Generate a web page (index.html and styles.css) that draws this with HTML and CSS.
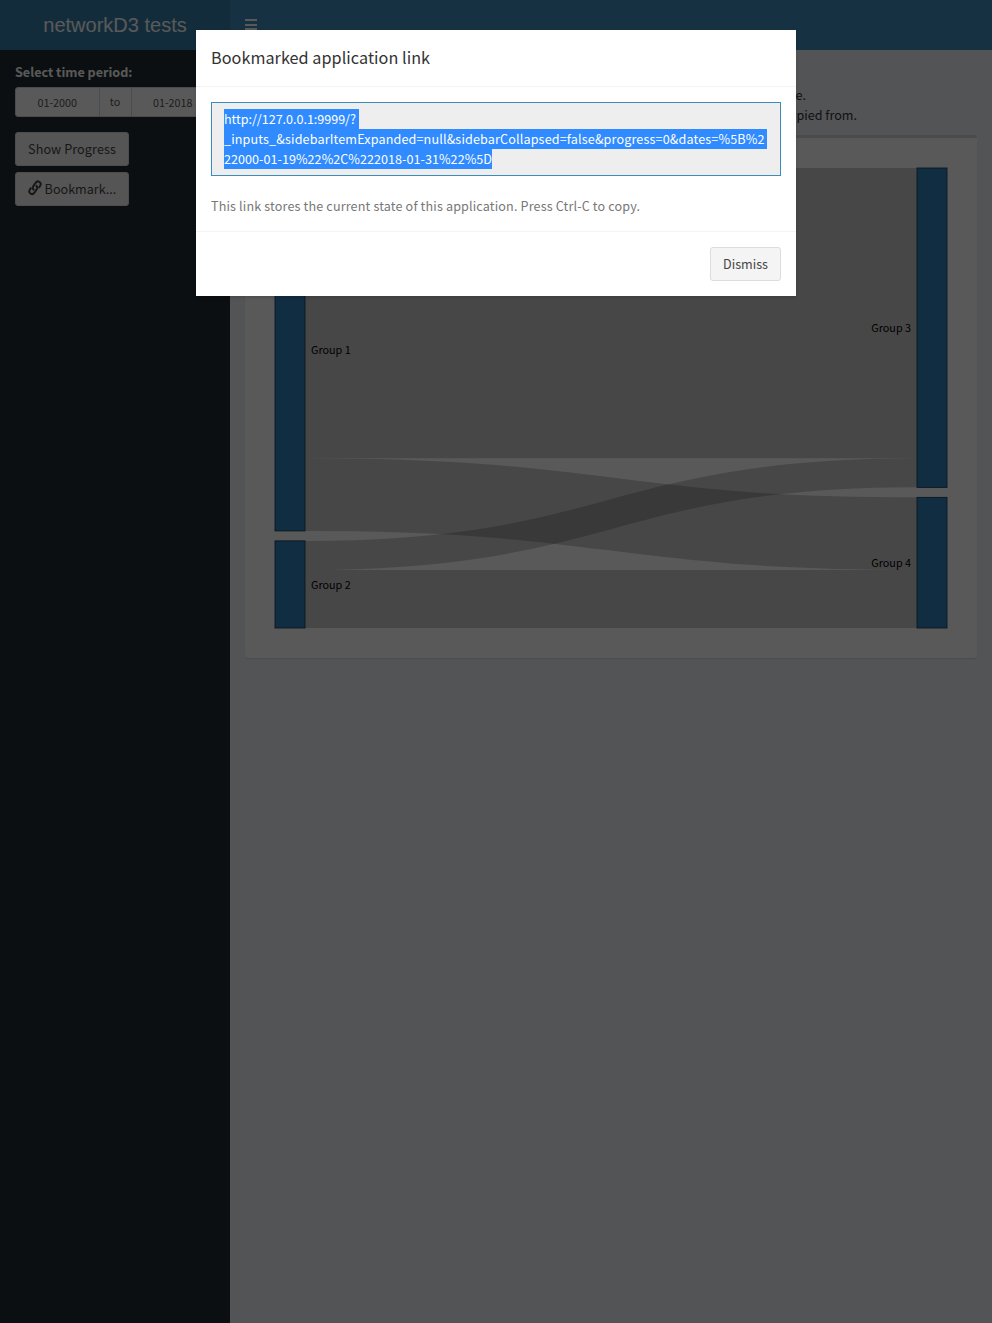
FILE: index.html
```html
<!DOCTYPE html>
<html lang="en">
<head>
<meta charset="utf-8">
<title>networkD3 tests</title>
<link rel="stylesheet" href="styles.css">
</head>
<body>
<div class="app">
  <header class="header">
    <div class="logo">networkD3 tests</div>
    <nav class="navbar">
      <svg class="bars" width="12" height="12" viewBox="0 0 12 12" shape-rendering="crispEdges"><path d="M0 0h12v2H0zM0 5h12v2H0zM0 9h12v2H0z" fill="#fff"/></svg>
    </nav>
  </header>
  <div class="main">
    <aside class="sidebar">
      <div class="label">Select time period:</div>
      <div class="range">
        <span class="date">01-2000</span><span class="to">to</span><span class="date">01-2018</span>
      </div>
      <button class="btn progress">Show Progress</button>
      <button class="btn bookmark"><svg class="link-icon" width="14" height="16" viewBox="0 0 14 16" fill="none" stroke="#444" stroke-width="2" stroke-linecap="butt" stroke-linejoin="round"><path d="M6.3 10.2C4.7 9.3 4.3 7.9 5.2 6.4L7.6 2.8C8.6 1.4 10.2 1.1 11.5 2C12.8 2.9 13.1 4.4 12.2 5.8L10.8 7.9"/><path d="M7.7 5.3C9.3 6.3 9.7 7.6 8.8 9.1L6.4 12.7C5.4 14.1 3.8 14.4 2.5 13.5C1.2 12.6.9 11.1 1.8 9.7L3.2 7.6"/></svg><span>Bookmark...</span></button>
    </aside>
    <main class="content">
      <div class="intro">
        <p class="line-a">from the source.</p>
        <p class="line-b">copied from.</p>
      </div>
      <section class="box">
        <svg class="sankey" width="674" height="462" viewBox="0 0 674 462">
          <g fill="none" stroke="#000" stroke-opacity=".2">
            <path d="M31 146.1H643" stroke-width="290.3"/>
            <path d="M31 327.6C337 327.6 337 366.6 643 366.6" stroke-width="72.6"/>
            <path d="M31 388.5C337 388.5 337 305.8 643 305.8" stroke-width="29"/>
            <path d="M31 432H643" stroke-width="58"/>
          </g>
          <g fill="#3182bd" stroke="#183f5c" stroke-opacity=".9">
            <rect x="1" y="1" width="30" height="362.9"/>
            <rect x="1" y="373.9" width="30" height="87.1"/>
            <rect x="643" y="1" width="30" height="319.4"/>
            <rect x="643" y="330.4" width="30" height="130.6"/>
          </g>
          <g class="node-text">
            <text x="37" y="186.5">Group 1</text>
            <text x="37" y="421.5">Group 2</text>
            <text x="637" y="164.5" text-anchor="end">Group 3</text>
            <text x="637" y="399.5" text-anchor="end">Group 4</text>
          </g>
        </svg>
      </section>
    </main>
  </div>
</div>
<div class="modal">
  <div class="dialog">
    <div class="dialog-header">Bookmarked application link</div>
    <div class="dialog-body">
      <div class="url">
        <div><span class="sel first">http://127.0.0.1:9999/?</span></div>
        <div><span class="sel second">_inputs_&amp;sidebarItemExpanded=null&amp;sidebarCollapsed=false&amp;progress=0&amp;dates=%5B%2</span></div>
        <div><span class="sel third">22000-01-19%22%2C%222018-01-31%22%5D</span></div>
      </div>
      <div class="hint">This link stores the current state of this application. Press Ctrl-C to copy.</div>
    </div>
    <div class="dialog-footer"><button class="btn dismiss">Dismiss</button></div>
  </div>
</div>
</body>
</html>
```
FILE: styles.css
```css
* { box-sizing: border-box; }
body {
  margin: 0;
  height: 1323px;
  overflow: hidden;
  font-family: "Source Sans Pro", "Noto Sans CJK SC", sans-serif;
  font-size: 12.6px;
  line-height: 20px;
  color: #333;
}
.app { display: flex; flex-direction: column; height: 1323px; }
.header { display: flex; height: 50px; }
.logo {
  width: 230px;
  background: #367fa9;
  color: #fff;
  font: 20px/50px "Liberation Sans", Arial, sans-serif;
  text-align: center;
}
.navbar { flex: 1; background: #3c8dbc; padding: 19px 15px; }
.bars { display: block; }
.main { display: flex; flex: 1; }
.sidebar { width: 230px; background: #222d32; padding: 12px 15px; color: #fff; }
.label { font-weight: 700; margin-bottom: 5px; }
.range {
  display: flex;
  width: 200px;
  height: 30px;
  background: #fff;
  border: 1px solid #d2d6de;
  border-radius: 3px;
  color: #555;
  font-size: 10.8px;
  line-height: 29px;
  text-align: center;
  overflow: hidden;
}
.date { flex: 1; }
.to { width: 33px; border: solid #d2d6de; border-width: 0 1px; line-height: 27px; }
.btn {
  display: flex;
  align-items: center;
  justify-content: center;
  height: 34px;
  padding: 0;
  border: 1px solid #ddd;
  border-radius: 3px;
  background: #f4f4f4;
  color: #444;
  font: inherit;
}
.progress, .bookmark { width: 114px; }
.progress { margin-top: 15px; letter-spacing: .1px; }
.bookmark { margin-top: 6px; gap: 3px; }
.link-icon { margin-top: -2px; }
.content { flex: 1; background: #ecf0f5; padding: 35px 15px 0; }
.intro { height: 50px; text-align: right; }
.intro p { margin: 0; }
.line-a { padding-right: 171px; }
.line-b { padding-right: 120px; }
.box {
  height: 523px;
  background: #fff;
  border-top: 3px solid #d2d6de;
  border-radius: 3px;
  box-shadow: 0 1px 1px rgba(0, 0, 0, .1);
  padding: 29px 29px 0;
}
.sankey { display: block; }
.node-text { font-size: 10.8px; fill: #000; }
.modal {
  position: absolute;
  inset: 0;
  display: flex;
  justify-content: center;
  align-items: flex-start;
  padding-top: 30px;
  background: rgba(0, 0, 0, .65);
}
.dialog { width: 600px; background: #fff; box-shadow: 0 2px 3px rgba(0, 0, 0, .125); }
.dialog-header {
  height: 57px;
  padding: 0 15px;
  border-bottom: 1px solid #f4f4f4;
  font-size: 16.2px;
  line-height: 54px;
  letter-spacing: .05px;
}
.dialog-body { height: 144px; padding: 15px; }
.url {
  height: 74px;
  padding: 6px 12px;
  border: 1px solid #3c8dbc;
  background: #eee;
  white-space: nowrap;
}
.url div { display: flex; height: 20px; }
.sel { height: 20px; background: #2f8bff; color: #fff; }
.first { padding-right: 3px; letter-spacing: -.04px; }
.second { padding-right: 2.7px; letter-spacing: .14px; }
.third { letter-spacing: .03px; }
.hint { margin-top: 20px; color: #777; letter-spacing: .145px; }
.dialog-footer {
  display: flex;
  justify-content: flex-end;
  height: 65px;
  padding: 15px;
  border-top: 1px solid #f4f4f4;
}
.dismiss { width: 71px; }
```
